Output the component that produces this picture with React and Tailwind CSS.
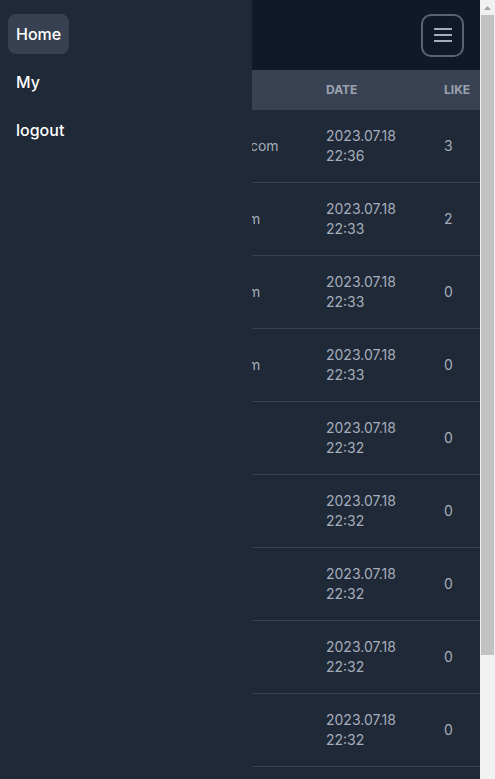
import React from "react";

const rows = [
  { id: 11, title: "글", email: "dev.kim0718@gmail.com", date: "2023.07.18", time: "22:36", like: 3 },
  { id: 10, title: "글", email: "hello1234@naver.com", date: "2023.07.18", time: "22:33", like: 2 },
  { id: 9, title: "글", email: "hello1234@naver.com", date: "2023.07.18", time: "22:33", like: 0 },
  { id: 8, title: "글", email: "hello1234@naver.com", date: "2023.07.18", time: "22:33", like: 0 },
  { id: 7, title: "hi", email: "test@test.com", date: "2023.07.18", time: "22:32", like: 0 },
  { id: 6, title: "hi", email: "test@test.com", date: "2023.07.18", time: "22:32", like: 0 },
  { id: 5, title: "hi", email: "test@test.com", date: "2023.07.18", time: "22:32", like: 0 },
  { id: 4, title: "hi", email: "test@test.com", date: "2023.07.18", time: "22:32", like: 0 },
  { id: 3, title: "hi", email: "test@test.com", date: "2023.07.18", time: "22:32", like: 0 },
  { id: 2, title: "hi", email: "test@test.com", date: "2023.07.18", time: "22:32", like: 0 },
  { id: 1, title: "hi", email: "test@test.com", date: "2023.07.18", time: "22:32", like: 0 },
];

const menu = ["Home", "My", "logout"];

function Header() {
  return (
    <div className="h-[70px] bg-[#111827] flex items-center justify-end pr-4">
      <button className="w-[43px] h-[43px] rounded-[10px] border-2 border-[#5b6373] flex items-center justify-center">
        <svg width="18" height="14" viewBox="0 0 18 14" fill="none">
          <path d="M0 1h18M0 7h18M0 13h18" stroke="#a6adbb" strokeWidth="2" />
        </svg>
      </button>
    </div>
  );
}

function BoardTable() {
  return (
    <table className="w-full table-fixed text-left">
      <colgroup>
        <col className="w-[48px]" />
        <col className="w-[54px]" />
        <col className="w-[208px]" />
        <col className="w-[118px]" />
        <col />
      </colgroup>
      <thead className="bg-[#394253]">
        <tr className="h-10 text-xs font-bold text-[#9ca3af] uppercase">
          <th className="px-4">No</th>
          <th className="px-4">Title</th>
          <th className="px-4">Email</th>
          <th className="px-4">Date</th>
          <th className="px-4">Like</th>
        </tr>
      </thead>
      <tbody className="text-sm text-[#a6adbb]">
        {rows.map((r) => (
          <tr key={r.id} className="border-b border-[#374151]">
            <td className="px-4 py-4">{r.id}</td>
            <td className="px-4 py-4">{r.title}</td>
            <td className="pl-[13px] pr-4 py-4 whitespace-nowrap">{r.email}</td>
            <td className="px-4 py-4 leading-5">
              {r.date}
              <br />
              {r.time}
            </td>
            <td className="px-4 py-4">{r.like}</td>
          </tr>
        ))}
      </tbody>
    </table>
  );
}

function Scrollbar() {
  return (
    <div className="fixed right-0 top-0 h-screen w-[15px] bg-[#f1f1f1] flex flex-col items-center">
      <div className="h-[15px] flex items-center justify-center">
        <svg width="7" height="4" viewBox="0 0 7 4">
          <path d="M0 4L3.5 0L7 4Z" fill="#a3a3a3" />
        </svg>
      </div>
      <div className="w-[13px] h-[640px] bg-[#c1c1c1]" />
    </div>
  );
}

export default function App() {
  return (
    <div className="min-h-screen bg-[#f1f1f1] font-['Inter',sans-serif]">
      <div className="mr-[15px] bg-[#1f2937]">
        <Header />
        <BoardTable />
      </div>
      <Scrollbar />
      <aside className="fixed left-0 top-0 h-screen w-[252px] bg-[#1f2937] px-2 pt-[14px]">
        <ul className="flex flex-col gap-2">
          {menu.map((m, i) => (
            <li
              key={m}
              className={
                "h-10 px-2 rounded-lg flex items-center text-base font-medium text-white w-fit " +
                (i === 0 ? "bg-[#374151]" : "")
              }
            >
              {m}
            </li>
          ))}
        </ul>
      </aside>
    </div>
  );
}
